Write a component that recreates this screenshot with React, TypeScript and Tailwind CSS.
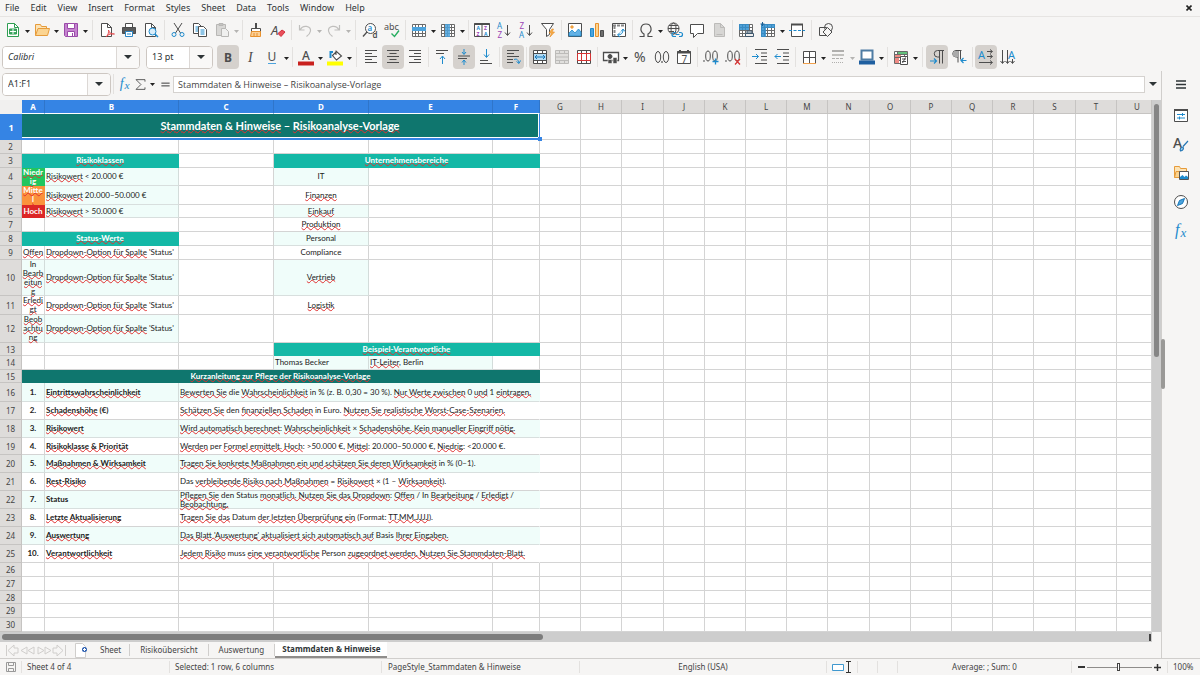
import React from "react";
import type { ReactNode } from "react";

const INK = "#4d4d4d";
const BLUE = "#1e8bcd";

function Svg({ children, size = 16 }: { children: ReactNode; size?: number }) {
  return (
    <svg width={size} height={size} viewBox="0 0 16 16" fill="none" stroke={INK} strokeWidth="1" aria-hidden="true" className="shrink-0 overflow-visible">
      {children}
    </svg>
  );
}

function Letter({ x, y, size, color = INK, children, weight = 400, italic = false, serif = false }: { x: number; y: number; size: number; color?: string; children: ReactNode; weight?: number; italic?: boolean; serif?: boolean }) {
  return (
    <text x={x} y={y} fontSize={size} fill={color} stroke="none" fontWeight={weight} fontStyle={italic ? "italic" : "normal"} fontFamily={serif ? "Liberation Serif, serif" : "Noto Sans, sans-serif"}>
      {children}
    </text>
  );
}

const gridLines = "M1.5 2.5h13v12h-13zM1.5 5.5h13M1.5 8.5h13M1.5 11.5h13M4.5 2.5v12M7.5 2.5v12M11.5 2.5v12";

const icons: Record<string, ReactNode> = {
  "New": <><path d="M2.5 1.5h7l4 4v9h-11z" fill="#fff" stroke="#2f9e52" /><path d="M9.5 1.5v4h4" stroke="#2f9e52" /><path d="M4.5 7h7v5h-7z" fill="#3fa863" stroke="#2f9e52" /><path d="M5 9.5h6M8 7v5" stroke="#fff" /></>,
  "Open": <><path d="M1.5 13.5v-11h5l1 2h5v2" fill="#fce3b5" stroke="#e69b3a" /><path d="M1.5 13.5l2.5-7h11.5l-2 7z" fill="#fbd491" stroke="#e69b3a" /></>,
  "Save": <><path d="M1.5 1.5h13v13h-12l-1-1z" fill="#c583cf" stroke="#9a4aa8" /><path d="M4.5 1.5h7v5h-7zM4.5 9.5h7v5h-7z" fill="#fff" stroke="#9a4aa8" /><path d="M9.5 11v3" stroke="#9a4aa8" /></>,
  "Export as PDF": <><path d="M2.5 1.5h6l4 4v9h-10z" fill="#fff" /><path d="M8.5 1.5v4h4" /><path d="M7 15c2-2 3-5 2.500-7 1 3 3 4.500 6 4-3-.5-6 0-8.500 3z" stroke="#e03a3e" strokeWidth=".8" fill="#f7b6b8" /></>,
  "Print": <><path d="M4.5 1.5h7v4h-7z" fill="#fff" /><path d="M1.5 5.5h13v6h-13z" fill="#5a5a5a" /><path d="M4.5 9.5h7v5h-7z" fill="#fff" stroke="#2d86c4" /><path d="M6 12h4" stroke={BLUE} /></>,
  "Print Preview": <><path d="M2.5 1.5h6l4 4v9h-10z" fill="#fff" /><path d="M8.5 1.5v4h4" /><circle cx="9.5" cy="9.5" r="3.5" fill="#d9edfa" stroke={BLUE} /><path d="M12 12l3 3" stroke={BLUE} strokeWidth="1.5" /></>,
  "Cut": <><path d="M4 1l6.500 10M12 1L5.500 11" /><circle cx="4" cy="12.5" r="2" stroke={BLUE} /><circle cx="12" cy="12.5" r="2" stroke={BLUE} /></>,
  "Copy": <><path d="M1.5 1.5h5l3 3v7h-8z" fill="#fff" /><path d="M3.5 5h3M3.5 7h3M3.5 9h3" stroke={BLUE} /><path d="M6.5 4.5h5l3 3v7h-8z" fill="#fff" /><path d="M8.5 8h4M8.5 10h4M8.5 12h4" stroke={BLUE} /></>,
  "Paste": <><path d="M2.5 2.5h9v11h-9z" fill="#d8d7d5" stroke="#b8b7b5" /><path d="M5 1.5h4v2H5z" fill="#c4c3c1" stroke="#b8b7b5" /><path d="M7.5 6.5h4l3 3v5h-7z" fill="#f0f0ef" stroke="#b8b7b5" /></>,
  "Clone Formatting": <><path d="M8 1v5" strokeWidth="2" /><path d="M3.5 6.5h9v3h-9z" fill="#fff" /><path d="M3.5 9.5h9v5h-10z" fill="#fbcf96" stroke="#e8912d" /><path d="M6 11v3M9 11v3" stroke="#e8912d" /></>,
  "Clear Direct Formatting": <><Letter x={1} y={12.5} size={13} italic>A</Letter><path d="M8 11.5l4-3.500 3 2-4 4.500z" fill="#e94f5a" stroke="#d3303c" /></>,
  "Undo": <path d="M2.500 3v5h5M3 8c3-6 11-4 10.500 1-.3 2.500-2 4-4 5.500" stroke="#c0bfbd" strokeWidth="1.2" />,
  "Redo": <path d="M13.500 3v5h-5M13 8C10 2 2 4 2.500 9c.3 2.500 2 4 4 5.500" stroke="#c0bfbd" strokeWidth="1.2" />,
  "Find and Replace": <><circle cx="8.5" cy="6.5" r="5" fill="#fff" /><path d="M5 10l-4 4.500" strokeWidth="1.3" /><Letter x={5.5} y={9} size={8} color={BLUE} weight={600}>a</Letter><Letter x={10.5} y={15.5} size={8} weight={600}>d</Letter></>,
  "Spelling": <><Letter x={0} y={7.5} size={9}>abc</Letter><path d="M7.5 11.5l3 3L15 8.500" stroke="#27ae60" strokeWidth="1.4" /></>,
  "Row": <><path d={gridLines} fill="#fff" stroke="#6a6a6a" /><path d="M1 5h14v4H1z" fill="#4ca3dd" stroke="none" /></>,
  "Column": <><path d={gridLines} fill="#fff" stroke="#6a6a6a" /><path d="M5 2h5v13H5z" fill="#4ca3dd" stroke="none" opacity=".85" /></>,
  "Sort": <><path d="M.5 1.5h15v13H.5zM8 1.5v13" fill="#fff" /><path d="M.5 2h15" strokeWidth="2" /><Letter x={2.5} y={8} size={5} color={BLUE} weight={700}>A</Letter><Letter x={2.5} y={13.5} size={5} color="#9b45b5" weight={700}>Z</Letter><Letter x={10} y={8} size={5} color="#9b45b5" weight={700}>Z</Letter><Letter x={10} y={13.5} size={5} color={BLUE} weight={700}>A</Letter></>,
  "Sort Ascending": <><Letter x={1} y={7} size={8} color={BLUE}>A</Letter><Letter x={1.5} y={15.5} size={8} color="#9b45b5">Z</Letter><path d="M11.5 3v10M9 10.500l2.500 3 2.500-3" /></>,
  "Sort Descending": <><Letter x={1.5} y={7} size={8} color="#9b45b5">Z</Letter><Letter x={1} y={15.5} size={8} color={BLUE}>A</Letter><path d="M11.5 3v10M9 10.500l2.500 3 2.500-3" /></>,
  "AutoFilter": <><path d="M1.5 1.5h12l-4 6v5l-3 2v-7z" fill="#fff" /><path d="M12 7l-3 4h2.500L10 15l4.500-5H12l1.500-3z" fill="#f6b04d" stroke="#e8912d" strokeWidth=".7" /></>,
  "Image": <><path d="M1.5 1.5h13v13h-13z" fill="#fff" /><path d="M2 14v-3l3-3 3 3 3.500-4 2.500 3v4z" fill="#63b1e5" stroke={BLUE} strokeWidth=".8" /><circle cx="5" cy="5" r="1.3" fill="#f6b04d" stroke="#e8912d" strokeWidth=".7" /></>,
  "Chart": <><path d="M1.5 6.5h3v8h-3z" fill="#4ca3dd" stroke={BLUE} /><path d="M6.5 1.5h3v13h-3z" fill="#fbd491" stroke="#e8912d" /><path d="M11.5 8.5h3v6h-3z" fill="#6d6d6d" /></>,
  "Pivot Table": <><path d="M1.5 1.5h13v13h-13z" fill="#fff" /><path d="M2 3.5h12M3.5 4v10" stroke="#888" strokeWidth="2" strokeDasharray="3 1" /><path d="M7 13c3 0 5-2 5-5M10 9.500L12 7l2 2.500M9 10.500L6.500 13 9 15" stroke={BLUE} /></>,
  "Special Character": <path d="M1.500 14.500h4.500v-2.500C1 9 2.500 2 8 2s7 7 2 10v2.500h4.500" strokeWidth="1.2" />,
  "Hyperlink": <><circle cx="6.5" cy="6.5" r="5.5" /><ellipse cx="6.5" cy="6.5" rx="2.5" ry="5.5" /><path d="M1 6.500h11M2 3.500h9M2 9.500h5" /><path d="M9 10.500H7a2 2 0 000 4h2M12 10.500h1.500a2 2 0 010 4H12M8.500 12.500h4" stroke={BLUE} strokeWidth="1.2" /></>,
  "Comment": <path d="M1.5 2.5h13v9h-6l-4 4v-4h-3z" fill="#fff" />,
  "Headers and Footers": <><path d="M3.5 1.5h6l4 4v9h-10z" fill="#d7d6d4" stroke="#bcbbb9" /><path d="M9.5 1.5v4h4M5.5 12.5h6" stroke="#bcbbb9" /></>,
  "Define Print Area": <><path d={gridLines} fill="#fff" stroke="#6a6a6a" /><path d="M1 2h10v6H1z" fill="#2f8fd0" stroke="none" opacity=".85" /><path d="M7.5 11.5h8v3h-8zM9 9h5v2H9z" fill="#eee" stroke="#3f586e" /></>,
  "Freeze Rows and Columns": <><path d={gridLines} fill="#fff" stroke="#6a6a6a" /><path d="M1 2h14v4H1zM1 2h5v13H1z" fill="#2f8fd0" stroke="none" opacity=".85" /><path d="M2.5 0v4M.5 2h4" stroke="#1c5f94" /></>,
  "Split Window": <><path d="M2.5 2.5h11v12h-11z" fill="#fff" /><path d="M2 2.5h12" strokeWidth="2" /><path d="M0 8.5h16" stroke={BLUE} strokeDasharray="3 1.5" /></>,
  "Show Draw Functions": <><path d="M1.5 5.5h7v8h-7z" fill="#f6f5f4" /><circle cx="10.5" cy="5.5" r="4" /><path d="M9.5 5.5l4.500 4.500-4.500 4.500L5 10z" fill="#f6f5f4" /></>,
  "Italic": <Letter x={6} y={13} size={14} italic serif>I</Letter>,
  "Bold": <Letter x={4} y={12.5} size={12} weight={700}>B</Letter>,
  "Underline": <><Letter x={3.5} y={12} size={12}>U</Letter><path d="M4 14.500h8" stroke="#4ca3dd" strokeWidth="1" /></>,
  "Font Color": <><Letter x={4} y={10.5} size={12} weight={500}>A</Letter><path d="M0 14.500h16" stroke="#c9211e" strokeWidth="4" /></>,
  "Background Color": <><path d="M5.5 6.5l4-4 5 4.500-5 4-4-4.500zM9 6V1.500" fill="#fff" strokeWidth="1.1" /><path d="M6 3H3.500v6" stroke={BLUE} strokeWidth="2" /><path d="M0 14.500h16" stroke="#ffff00" strokeWidth="4" /></>,
  "Align Left": <path d="M2 1.500h12M2 4.500h7M2 7.500h12M2 10.500h7M2 13.500h12" />,
  "Align Center": <path d="M2 1.500h12M4.500 4.500h7M2 7.500h12M4.500 10.500h7M2 13.500h12" />,
  "Align Right": <path d="M2 1.500h12M7 4.500h7M2 7.500h12M7 10.500h7M2 13.500h12" />,
  "Align Top": <><path d="M2 1.500h12M2 4.500h8" /><path d="M8.500 15V7.500M6 10l2.500-3L11 10" stroke={BLUE} /></>,
  "Center Vertically": <><path d="M2 7h12M2 9.500h9" /><path d="M8 0v5M6 3l2 2.500L10 3M8 16v-5M6 13.500L8 11l2 2.500" stroke={BLUE} /></>,
  "Align Bottom": <><path d="M2 11.500h8M2 14.500h12" /><path d="M8.500 0v8M6 5.500l2.500 3 2.500-3" stroke={BLUE} /></>,
  "Wrap Text": <><path d="M2 1.500h12M2 4.500h7M2 7.500h12M2 10.500h6M2 13.500h6" /><path d="M9 10.500c3-1 4 0 5 3.500M11.500 12.500l2.500 2 1.500-3" stroke={BLUE} /></>,
  "Merge and Center Cells": <><path d="M1.5 1.5h13v13h-13zM1.5 4.5h13M1.5 11.5h13M5.5 1.5v3M10.5 1.5v3M5.5 11.5v3M10.5 11.5v3" fill="#fff" /><path d="M2 5h12v6H2z" fill="#b5dcf4" stroke="none" /><path d="M3 8h10M5 6L3 8l2 2M11 6l2 2-2 2" stroke="#1576b8" /></>,
  "Merge Cells": <path d="M1.5 1.5h13v13h-13zM1.5 4.5h13M1.5 11.5h13M5.5 1.5v3M10.5 1.5v3M5.5 11.5v3M10.5 11.5v3M1.5 8h13" fill="#e0dfdd" stroke="#bcbbb9" />,
  "Split Cells": <><path d="M1.5 1.5h13v13h-13zM1.5 4.5h13M1.5 11.5h13M5.5 1.5v3M10.5 1.5v3M5.5 11.5v3M10.5 11.5v3" fill="#fff" /><path d="M1.5 4.5h13v7h-13zM5.5 4.5v7M10.5 4.5v7" stroke="#d63434" /></>,
  "Format as Currency": <><path d="M.5 3.5h15v8H.5z" fill="#fff" strokeWidth="1.3" /><circle cx="7" cy="7.5" r="2" fill="#4d4d4d" /><path d="M5 10.5h4v4H5zM10 8.5h4v6h-4z" fill="#4d4d4d" stroke="#f6f5f4" strokeWidth=".6" /></>,
  "Format as Percent": <Letter x={2} y={13} size={14}>%</Letter>,
  "Format as Number": <><ellipse cx="4" cy="8" rx="2.7" ry="5.5" /><ellipse cx="12" cy="8" rx="2.7" ry="5.5" /><circle cx="8" cy="13" r=".5" /></>,
  "Format as Date": <><path d="M1.5 2.5h13v12h-13z" fill="#fff" /><path d="M1 3.5h14M4 1v3M12 1v3" strokeWidth="2" /><Letter x={5.5} y={13.5} size={10}>7</Letter></>,
  "Add Decimal Place": <><ellipse cx="5" cy="7" rx="2.3" ry="5" /><ellipse cx="12" cy="7" rx="2.3" ry="5" /><circle cx="1" cy="12" r=".4" /><path d="M9.5 12.5h6M12.5 9.5v6" stroke={BLUE} strokeWidth="1.3" /></>,
  "Delete Decimal Place": <><ellipse cx="5" cy="7" rx="2.3" ry="5" /><ellipse cx="12" cy="7" rx="2.3" ry="5" /><circle cx="1" cy="12" r=".4" /><path d="M10 10l5 5.500M15 10l-5 5.500" stroke="#d63434" strokeWidth="1.2" /></>,
  "Increase Indent": <><path d="M3 .5h12M9 4h6M9 7.500h6M9 11h6M3 14.500h12" /><path d="M0 7.500h6.500M4 5L6.500 7.500 4 10" stroke={BLUE} /></>,
  "Decrease Indent": <><path d="M3 .5h12M9 4h6M9 7.500h6M9 11h6M3 14.500h12" /><path d="M7 7.500H.8M3.500 5L1 7.500 3.500 10" stroke={BLUE} /></>,
  "Borders": <><path d="M2.5 2.5h12v12h-12zM8.5 2.5v12M2.5 8.5h12" fill="#fff" /><path d="M2 14.5h13" stroke="#f0a04b" /></>,
  "Border Style": <><path d="M2 2h12" stroke="#b0afad" strokeWidth="2" /><path d="M2 6h12" stroke="#b0afad" strokeWidth="1.5" /><path d="M2 9.500h12" stroke="#b0afad" strokeDasharray="3 1" /><path d="M2 13.500h12" stroke="#b0afad" strokeDasharray="1 1" /></>,
  "Border Color": <><path d="M2.5 1.5h11v9h-11z" fill="#fff" stroke="#4e7ca3" strokeWidth="2" /><path d="M0 13.500h16" stroke="#1f5fa0" strokeWidth="4" /></>,
  "Conditional Formatting": <><path d={gridLines} fill="#fff" stroke="#6a6a6a" /><path d="M5 3h9v2H5z" fill="#63c07b" stroke="none" /><path d="M2 6h6v2H2zM2 9h4v5H2z" fill="#ef8a84" stroke="none" /><path d="M7.5 7.5h7v8h-7z" fill="#fff" /><path d="M9 10h4M9 12.5h4M12.5 8.5L9.5 14" /></>,
  "Left-To-Right": <><path d="M13.500 1.500v13M10.500 14.500V1.500M15 1.500H8.500a3 3 0 000 6.500h2" /><path d="M1 12h6M5 9.500L7.500 12 5 14.500" stroke={BLUE} strokeWidth="1.2" /></>,
  "Right-To-Left": <><path d="M7 1.500v12M9.500 1.500v9M10.500 1.500H5a3 3 0 000 6.500h2" /><path d="M4.500 2H7v6H5a3 3 0 01-.5-6z" fill="#aaa" stroke="none" /><path d="M15.500 11.500h-5M12.500 9l-2.500 2.500 2.500 2.500" stroke={BLUE} strokeWidth="1.2" /></>,
  "Text Direction Horizontal": <><Letter x={0} y={9.5} size={11} color={BLUE}>A</Letter><path d="M9 2.500h5M12 .5l2.500 2L12 4.500M9 7.500h5M12 5.500l2.500 2-2.500 2M1 13.500h13M12 11.500l2.500 2-2.500 2" /></>,
  "Text Direction Vertical": <><Letter x={8} y={9.5} size={11} color={BLUE}>A</Letter><path d="M2.500 1v13M.5 12l2 2.500 2-2.500M7.500 1v13M5.500 12l2 2.500 2-2.500M12.500 10v4M10.500 12l2 2.500 2-2.500" /></>,
  "Properties": <><path d="M1.5 2.5h13v12h-13z" fill="#fff" /><path d="M1 3h14" strokeWidth="2" /><path d="M4 7.500h8M4 11h8M9.500 6v3M6.500 9.500v3" stroke={BLUE} /></>,
  "Styles": <><Letter x={0} y={12} size={14} weight={500}>A</Letter><path d="M15 5l-5 5.500M7.500 15c-1-2 .5-4 2.500-4 1 1.500 0 4-2.500 4z" fill="#9ed0f0" stroke="#2577b5" strokeWidth="1.2" /></>,
  "Gallery": <><path d="M1.5 12.5v-11h5l1 2h6v3" fill="#fce3b5" stroke="#e69b3a" /><path d="M1.5 12.5l1.500-6h11v6z" fill="#fbd491" stroke="#e69b3a" /><path d="M6.5 6.5h9v8h-9z" fill="#fff" stroke="#555" /><path d="M7 14v-2l2.500-2 2 2 1.500-1.500 2 1.500v2z" fill={BLUE} stroke="none" /></>,
  "Navigator": <><circle cx="8" cy="8" r="6.5" fill="#fff" /><path d="M11.500 4.500L9.500 9.500l-5 2 2-5z" fill="#4ca3dd" stroke="#1576b8" /></>,
  "Functions": <><Letter x={2} y={12} size={16} color={BLUE} italic serif>f</Letter><Letter x={7.5} y={14} size={13} color={BLUE} italic serif>x</Letter></>,
  "Sum": <path d="M13.500 4.500v-2.500h-11l6 6-6 6h11V11.500" strokeWidth="1.1" />,
  "Formula": <path d="M2 6h12M2 10h12" stroke="#333" strokeWidth="1.4" />,
};

function Caret({ muted = false }: { muted?: boolean }) {
  return (
    <svg width="5" height="3" viewBox="0 0 5 3" aria-hidden="true">
      <path d="M0 0h5L2.500 3z" fill={muted ? "#b5b4b2" : "#222"} />
    </svg>
  );
}

function BigCaret() {
  return (
    <svg width="8" height="4" viewBox="0 0 8 4" aria-hidden="true">
      <path d="M0 0h8L4 4z" fill="#2e3436" />
    </svg>
  );
}

function ToolButton({ name, active = false }: { name: string; active?: boolean }) {
  return (
    <button type="button" aria-label={name} aria-pressed={active} className={"flex h-6 w-[22px] shrink-0 items-center justify-center rounded-sm " + (active ? "bg-[#d5d1cd]" : "")}>
      <Svg>{icons[name]}</Svg>
    </button>
  );
}

const mutedCarets = ["Paste", "Undo", "Redo", "Border Style"];

/* "|" is a separator, "||" a wide separator; a trailing "+" adds a drop-down arrow, a trailing "*" marks a pressed button. */
function ToolItems({ items }: { items: string[] }) {
  return (
    <>
      {items.map((item, i) => {
        if (item === "|" || item === "||") {
          return (
            <span key={i} className={"flex h-5 shrink-0 justify-center " + (item === "|" ? "w-[5px]" : "w-[7px]")}>
              <span className="w-px bg-[#e3e1df]" />
            </span>
          );
        }
        const name = item.replace(/[+*]$/, "");
        return (
          <React.Fragment key={i}>
            <ToolButton name={name} active={item.endsWith("*")} />
            {item.endsWith("+") && (
              <button type="button" aria-label={name + " options"} className="flex h-6 w-[7px] shrink-0 items-center justify-center pt-[2px]">
                <Caret muted={mutedCarets.includes(name)} />
              </button>
            )}
          </React.Fragment>
        );
      })}
    </>
  );
}

const standardBar = ["New+", "Open+", "Save+", "||", "Export as PDF", "Print", "Print Preview", "|", "Cut", "Copy", "Paste+", "|", "Clone Formatting", "Clear Direct Formatting", "|", "Undo+", "Redo+", "||", "Find and Replace", "Spelling", "|", "Row+", "Column+", "|", "Sort", "Sort Ascending", "Sort Descending", "AutoFilter", "|", "Image", "Chart", "Pivot Table", "|", "Special Character+", "Hyperlink", "Comment", "Headers and Footers", "|", "Define Print Area", "Freeze Rows and Columns+", "Split Window", "||", "Show Draw Functions"];

const formatBar = ["Bold*", "Italic", "Underline+", "|", "Font Color+", "Background Color+", "||", "Align Left", "Align Center*", "Align Right", "|", "Align Top", "Center Vertically*", "Align Bottom", "|", "Wrap Text*", "|", "Merge and Center Cells*", "Merge Cells", "Split Cells", "|", "Format as Currency+", "Format as Percent", "Format as Number", "Format as Date", "|", "Add Decimal Place", "Delete Decimal Place", "|", "Increase Indent", "Decrease Indent", "|", "Borders+", "Border Style+", "Border Color+", "|", "Conditional Formatting+", "||", "Left-To-Right*", "Right-To-Left", "|", "Text Direction Horizontal*", "Text Direction Vertical"];

function ComboBox({ label, value, className, inputClass = "" }: { label: string; value: string; className: string; inputClass?: string }) {
  return (
    <div className={"flex h-[23px] shrink-0 overflow-hidden rounded border border-[#cdc7c2] bg-white " + className}>
      <input aria-label={label} defaultValue={value} className={"min-w-0 flex-1 bg-white px-[5px] text-[9px] text-[#2e3436] outline-none " + inputClass} />
      <button type="button" aria-label={label + " list"} className="flex w-[23px] items-center justify-center border-l border-[#dcd8d5] bg-[#f9f8f7]">
        <BigCaret />
      </button>
    </div>
  );
}

/* Text between asterisks is flagged by the spell checker. */
function Spelled({ text }: { text: string }) {
  return (
    <span>
      {text.split("*").map((part, i) =>
        i % 2 ? (
          <span key={i} className="underline decoration-[#e03131] decoration-wavy decoration-1 [text-decoration-skip-ink:none] [text-underline-offset:-1px]">
            {part}
          </span>
        ) : (
          part
        ),
      )}
    </span>
  );
}

type Cell = { span?: number; text?: string; tone?: string; look?: string };

const TINT = "bg-[#f0fdfa] border-r-[#d3dcda] border-b-[#d8dfde]";
const TINT_MERGED = "bg-[#f0fdfa] border-r-[#f0fdfa] border-b-[#d8dfde]";
const PLAIN = "border-r-[#d4d4d4] border-b-[#d4d4d4]";
const HEAD = "bg-[#14b8a6] border-r-[#14b8a6] border-b-[#14b8a6] text-white";
const DEEP = "bg-[#0f766e] border-r-[#0f766e] border-b-[#0f766e] text-white";
const MERGED = "border-r-white border-b-[#d4d4d4]";

const blank = (n: number): Cell[] => Array.from({ length: n }, () => ({}));
const center = "justify-center text-center";

function guide(no: number, title: string, text: string): Cell[] {
  const tinted = no % 2 === 1;
  return [
    { text: no + ".", tone: tinted ? TINT : PLAIN, look: center + " font-bold" },
    { text: title, tone: tinted ? TINT : PLAIN, look: "font-bold" },
    { span: 4, text, tone: tinted ? TINT_MERGED : MERGED },
  ];
}

const option = "*Dropdown-Option für Spalte* 'Status'";

const rows: { h: string; cells: Cell[] }[] = [
  { h: "h-[14px]", cells: blank(6) },
  { h: "h-[14px]", cells: [{ span: 2, text: "*Risikoklassen*", tone: HEAD, look: center + " font-bold" }, {}, { span: 3, text: "*Unternehmensbereiche*", tone: HEAD, look: center + " font-bold" }] },
  { h: "h-[18px]", cells: [{ text: "*Niedr ig*", tone: "bg-[#22c55e] border-r-[#22c55e] border-b-[#22c55e] text-white", look: center + " font-bold" }, { text: "*Risikowert* < 20.000 €", tone: TINT }, {}, { text: "IT", tone: TINT, look: center }, {}, {}] },
  { h: "h-[19px]", cells: [{ text: "*Mitte l*", tone: "bg-[#fb923c] border-r-[#fb923c] border-b-[#fb923c] text-white", look: center + " font-bold" }, { text: "*Risikowert* 20.000–50.000 €", tone: TINT }, {}, { text: "*Finanzen*", look: center }, {}, {}] },
  { h: "h-[13px]", cells: [{ text: "Hoch", tone: "bg-[#dc2626] border-r-[#dc2626] border-b-[#dc2626] text-white", look: center + " font-bold" }, { text: "*Risikowert* > 50.000 €", tone: TINT }, {}, { text: "*Einkauf*", tone: TINT, look: center }, {}, {}] },
  { h: "h-[14px]", cells: [{}, {}, {}, { text: "*Produktion*", look: center }, {}, {}] },
  { h: "h-[14px]", cells: [{ span: 2, text: "*Status-Werte*", tone: HEAD, look: center + " font-bold" }, {}, { text: "Personal", tone: TINT, look: center }, {}, {}] },
  { h: "h-[14px]", cells: [{ text: "*Offen*", look: center }, { text: option }, {}, { text: "Compliance", look: center }, {}, {}] },
  { h: "h-[36px]", cells: [{ text: "In *Bearb eitun g*", tone: TINT, look: center }, { text: option, tone: TINT }, {}, { text: "*Vertrieb*", tone: TINT, look: center }, {}, {}] },
  { h: "h-[19px]", cells: [{ text: "*Erledi gt*", look: center }, { text: option }, {}, { text: "*Logistik*", look: center }, {}, {}] },
  { h: "h-[28px]", cells: [{ text: "*Beob achtu ng*", tone: TINT, look: center }, { text: option, tone: TINT }, {}, {}, {}, {}] },
  { h: "h-[13px]", cells: [{}, {}, {}, { span: 3, text: "*Beispiel-Verantwortliche*", tone: HEAD, look: center + " font-bold" }] },
  { h: "h-[14px]", cells: [{}, {}, {}, { text: "Thomas Becker", tone: TINT }, { text: "*IT-Leiter*, Berlin", tone: TINT }, {}] },
  { h: "h-[13px]", cells: [{ span: 6, text: "*Kurzanleitung zur Pflege der Risikoanalyse-Vorlage*", tone: DEEP, look: center + " font-bold" }] },
  { h: "h-[19px]", cells: guide(1, "*Eintrittswahrscheinlichkeit*", "*Bewerten Sie* die *Wahrscheinlichkeit* in % (z. B. 0,30 = 30 %). *Nur Werte zwischen* 0 *und* 1 *eintragen.*") },
  { h: "h-[18px]", cells: guide(2, "*Schadenshöhe* (€)", "*Schätzen Sie* den *finanziellen Schaden* in Euro. *Nutzen Sie realistische Worst-Case-Szenarien.*") },
  { h: "h-[18px]", cells: guide(3, "*Risikowert*", "*Wird automatisch berechnet*: *Wahrscheinlichkeit* × *Schadenshöhe. Kein manueller Eingriff nötig.*") },
  { h: "h-[17px]", cells: guide(4, "*Risikoklasse & Priorität*", "*Werden* per *Formel ermittelt. Hoch*: >50.000 €, *Mittel*: 20.000–50.000 €, *Niedrig*: <20.000 €.") },
  { h: "h-[18px]", cells: guide(5, "*Maßnahmen & Wirksamkeit*", "*Tragen Sie konkrete Maßnahmen ein und schätzen Sie deren Wirksamkeit* in % (0–1).") },
  { h: "h-[18px]", cells: guide(6, "*Rest-Risiko*", "Das *verbleibende Risiko nach Maßnahmen* = *Risikowert* × (1 – *Wirksamkeit*).") },
  { h: "h-[18px]", cells: guide(7, "Status", "*Pflegen Sie* den Status *monatlich. Nutzen Sie das Dropdown*: *Offen* / In *Bearbeitung* / *Erledigt* / *Beobachtung.*") },
  { h: "h-[18px]", cells: guide(8, "*Letzte Aktualisierung*", "*Tragen Sie das* Datum *der letzten Überprüfung ein* (Format: *TT.MM.JJJJ*).") },
  { h: "h-[18px]", cells: guide(9, "*Auswertung*", "*Das Blatt 'Auswertung' aktualisiert sich automatisch auf* Basis *Ihrer Eingaben.*") },
  { h: "h-[18px]", cells: guide(10, "*Verantwortlichkeit*", "*Jedem Risiko* muss *eine verantwortliche* Person *zugeordnet werden. Nutzen Sie Stammdaten-Blatt.*") },
  { h: "h-[14px]", cells: blank(6) },
  { h: "h-[14px]", cells: blank(6) },
  { h: "h-[13px]", cells: blank(6) },
  { h: "h-[14px]", cells: blank(6) },
  { h: "h-[14px]", cells: blank(6) },
];

const letters = "ABCDEFGHIJKLMNOPQRSTU".split("");
const dataCols = ["w-[22px]", "w-[23px]", "w-[134px]", "w-[95px]", "w-[95px]", "w-[124px]", "w-[47px]"];
const wideCols = ["w-[41px]", "w-[41px]", "w-[42px]", "w-[41px]", "w-[41px]", "w-[41px]", "w-[41px]", "w-[42px]", "w-[41px]", "w-[41px]", "w-[41px]", "w-[41px]", "w-[42px]", "w-[41px]"];

function Grid() {
  const extra = letters.length - 6;
  return (
    <table className="w-full table-fixed border-separate border-spacing-0 bg-white font-[Lato,sans-serif] text-[8px] leading-[9px] text-[#222]">
      <colgroup>
        {[...dataCols, ...wideCols].map((w, i) => <col key={i} className={w} />)}
        <col />
      </colgroup>
      <thead>
        <tr className="font-['Noto_Sans',sans-serif] text-[8px]">
          <th aria-label="Select all" className="bg-[#f1f0ef] p-0" />
          {letters.map((l, i) => (
            <th key={l} scope="col" className={"h-[14px] border-r border-b p-0 text-center " + (i < 6 ? "border-r-[#2f75ca] border-b-white bg-[#3584e4] font-bold text-white " : "border-[#c6c4c2] bg-[#dedcda] font-normal text-[#444] ") + (l === "U" ? "pl-[6px]" : "")}>
              {l}
            </th>
          ))}
        </tr>
      </thead>
      <tbody>
        <tr>
          <th scope="row" className="h-[26px] bg-[#3584e4] p-0 text-center font-['Noto_Sans',sans-serif] text-[9px] font-bold text-white">1</th>
          <td colSpan={6} className="relative h-[26px] bg-[#3584e4] p-0 pr-px pb-[2px]">
            <div className="flex h-6 items-center justify-center border-r border-b border-white bg-[#0f766e] text-[11px] font-bold text-white">
              <Spelled text="*Stammdaten* & *Hinweise* – *Risikoanalyse-Vorlage*" />
            </div>
            <span className="absolute -right-[2px] -bottom-px size-[4px] bg-[#3584e4]" />
          </td>
          {Array.from({ length: extra }, (_, i) => <td key={i} className={"border-r border-b p-0 " + PLAIN} />)}
        </tr>
        {rows.map((row, r) => (
          <tr key={r}>
            <th scope="row" className={row.h + " border-r border-b border-[#c6c4c2] bg-[#dedcda] p-0 text-center font-['Noto_Sans',sans-serif] text-[8px] font-normal text-[#444]"}>{r + 2}</th>
            {row.cells.map((cell, c) => (
              <td key={c} colSpan={cell.span} className={row.h + " border-r border-b p-0 " + (cell.tone ?? PLAIN)}>
                {cell.text && (
                  <div className={"flex h-0 items-center px-px " + (cell.look ?? "")}>
                    <Spelled text={cell.text} />
                  </div>
                )}
              </td>
            ))}
            {Array.from({ length: extra }, (_, i) => <td key={"x" + i} className={"border-r border-b p-0 " + PLAIN} />)}
          </tr>
        ))}
      </tbody>
    </table>
  );
}

function SheetTabs() {
  return (
    <nav aria-label="Sheets" className="flex h-4 shrink-0 items-stretch bg-[#f6f5f4] text-[8px] text-[#444]">
      <div className="flex w-[72px] items-center justify-center">
        <svg width="62" height="12" viewBox="0 0 62 12" fill="none" stroke="#d0cecc" aria-hidden="true">
          <path d="M1.500 1v11M13 4H9V1L3 6.500 9 12V9h4zM22 3l-6 3.500 6 3.500zM29 3l-6 3.500 6 3.500zM33 3l6 3.500-6 3.500zM40 3l6 3.500-6 3.500zM48 4h4V1l6 5.500-6 5.500V9h-4zM60.500 1v11" />
        </svg>
      </div>
      <button type="button" aria-label="Add sheet" className="flex w-6 items-center pl-[2px]">
        <svg width="14" height="15" viewBox="0 0 14 15" fill="none" aria-hidden="true">
          <path d="M1.5.5h7l3 3v11h-10z" fill="#fff" stroke="#d0cecc" />
          <circle cx="10.5" cy="6.5" r="2.5" fill="#2a5db0" />
          <path d="M9 6.500h3M10.500 5v3" stroke="#fff" />
        </svg>
      </button>
      <button type="button" className="my-[2px] flex items-center border-r border-[#d0cecc] pr-2 pl-1">Sheet</button>
      <button type="button" className="my-[2px] flex items-center border-r border-[#d0cecc] px-[10px]">Risikoübersicht</button>
      <button type="button" className="my-[2px] flex items-center border-r border-[#d0cecc] px-[10px]">Auswertung</button>
      <button type="button" aria-current="page" className="flex items-center border-b-2 border-[#8f8d8b] bg-white px-[7px] font-bold text-[#2e3436]">Stammdaten &amp; Hinweise</button>
    </nav>
  );
}

function StatusBar() {
  return (
    <footer className="flex h-[17px] shrink-0 items-center border-t border-[#d0cecc] text-[8px] text-[#444] [&>div]:h-3 [&>div]:border-r [&>div]:border-[#e3e1df]">
      <div className="flex w-[22px] items-center justify-center">
        <svg width="12" height="12" viewBox="0 0 12 12" fill="none" stroke="#999" aria-hidden="true"><path d="M1.500 1.500h9v9h-9zM3.500 1.500v3h5v-3M3.500 10.500v-3h5v3" /></svg>
      </div>
      <div className="flex w-[148px] items-center pl-[5px]">Sheet 4 of 4</div>
      <div className="flex w-[212px] items-center pl-[5px]">Selected: 1 row, 6 columns</div>
      <div className="flex w-[198px] items-center pl-[6px]">PageStyle_Stammdaten &amp; Hinweise</div>
      <div className="flex flex-1 items-center justify-center">English (USA)</div>
      <div className="flex w-[31px] items-center justify-center">
        <svg width="20" height="12" viewBox="0 0 20 12" fill="none" aria-hidden="true">
          <path d="M.5 3.500h11v6H.5z" fill="#fff" stroke="#3f98cf" />
          <path d="M14 .5h5M14 11.500h5M16.500.5v11" stroke="#333" />
        </svg>
      </div>
      <div className="w-5" />
      <div className="w-5" />
      <div className="flex w-[174px] items-center justify-center">Average: ; Sum: 0</div>
      <div className="flex w-24 items-center justify-between px-[6px]">
        <button type="button" aria-label="Zoom out" className="h-[2px] w-[7px] bg-[#333]" />
        <input type="range" aria-label="Zoom" min={0} max={100} defaultValue={49} className="h-3 w-[65px] appearance-none bg-[linear-gradient(#8f8d8b,#8f8d8b)] bg-[length:100%_1px] bg-center bg-no-repeat [&::-webkit-slider-thumb]:h-2 [&::-webkit-slider-thumb]:w-[3px] [&::-webkit-slider-thumb]:appearance-none [&::-webkit-slider-thumb]:border [&::-webkit-slider-thumb]:border-[#444] [&::-webkit-slider-thumb]:bg-white" />
        <button type="button" aria-label="Zoom in" className="flex size-[7px] items-center justify-center">
          <svg width="7" height="7" viewBox="0 0 7 7" aria-hidden="true"><path d="M0 3.500h7M3.500 0v7" stroke="#333" strokeWidth="1.5" /></svg>
        </button>
      </div>
      <span className="w-8 pl-[5px]">100%</span>
    </footer>
  );
}

const menus = ["File", "Edit", "View", "Insert", "Format", "Styles", "Sheet", "Data", "Tools", "Window", "Help"];
const decks = ["Properties", "Styles", "Gallery", "Navigator", "Functions"];

export default function App() {
  return (
    <div className="flex h-screen flex-col overflow-hidden bg-[#f6f5f4] font-['Noto_Sans',sans-serif] text-[#2e3436]">
      <header className="flex h-[17px] shrink-0 items-center border-b border-[#e6e4e2] pl-[5px] text-[9px]">
        <nav aria-label="Menu" className="flex gap-[11px]">
          {menus.map((m) => <button key={m} type="button">{m}</button>)}
        </nav>
        <button type="button" aria-label="Close" className="mr-2 ml-auto">
          <svg width="6" height="6" viewBox="0 0 6 6" aria-hidden="true"><path d="M.5.5l5 5M5.500.5l-5 5" stroke="#222" strokeWidth="1.6" /></svg>
        </button>
      </header>

      <div role="toolbar" aria-label="Standard" className="flex h-[26px] shrink-0 items-center pl-[2px]">
        <ToolItems items={standardBar} />
      </div>
      <div role="toolbar" aria-label="Formatting" className="flex h-7 shrink-0 items-center pl-[2px]">
        <ComboBox label="Font name" value="Calibri" className="mr-[6px] w-[138px]" inputClass="italic" />
        <ComboBox label="Font size" value="13 pt" className="mr-1 w-[67px]" />
        <ToolItems items={formatBar} />
      </div>

      <div className="flex min-h-0 flex-1">
        <main className="flex min-w-0 flex-1 flex-col">
          <div className="flex h-[29px] shrink-0 items-center pb-[3px] pl-[2px]">
            <ComboBox label="Name box" value="A1:F1" className="w-[109px]" />
            <span className="mx-[2px] h-5 w-px bg-[#e3e1df]" />
            <button type="button" aria-label="Function wizard" className="flex w-[17px] justify-center"><Svg size={14}>{icons["Functions"]}</Svg></button>
            <button type="button" aria-label="Select function" className="flex w-[15px] justify-center"><Svg size={13}>{icons["Sum"]}</Svg></button>
            <button type="button" aria-label="Select function options" className="flex w-[9px] justify-center"><Caret /></button>
            <button type="button" aria-label="Formula" className="flex w-4 justify-center"><Svg size={11}>{icons["Formula"]}</Svg></button>
            <input aria-label="Formula input" defaultValue="Stammdaten & Hinweise – Risikoanalyse-Vorlage" className="h-[17px] min-w-0 flex-1 border border-[#d5d2cf] bg-white px-1 font-['Open_Sans',sans-serif] text-[9px] text-[#444] outline-none" />
            <button type="button" aria-label="Expand formula bar" className="flex w-4 items-center justify-center"><BigCaret /></button>
          </div>
          <div className="flex min-h-0 flex-1">
            <div className="min-w-0 flex-1 overflow-hidden"><Grid /></div>
            <div className="flex w-[9px] flex-col bg-[#cdcdcd] px-[2px] pt-1">
              <div className="h-[48%] rounded-full bg-[#858585]" />
            </div>
          </div>
          <div className="mr-[9px] flex h-[10px] shrink-0 items-center justify-between bg-[#cdcdcd] pl-[2px]">
            <div className="h-[6px] w-[47%] rounded-full bg-[#7d7d7d]" />
            <div className="mr-px h-[7px] w-[2px] bg-[#444]" />
          </div>
          <SheetTabs />
        </main>
        <aside className="relative flex w-[39px] shrink-0 flex-col items-center border-l border-[#d0cecc] pt-1">
          <button type="button" aria-label="Sidebar settings" className="flex h-[19px] w-6 items-center justify-center">
            <svg width="10" height="9" viewBox="0 0 10 9" aria-hidden="true"><path d="M0 1h10M0 4.500h10M0 8h10" stroke="#2e3436" strokeWidth="1.5" /></svg>
          </button>
          <div className="mt-[9px] flex flex-col gap-[5px]">
            {decks.map((d) => <ToolButton key={d} name={d} />)}
          </div>
          <span className="absolute top-[268px] -left-px h-[50px] w-1 rounded-sm bg-[#9a9997]" />
        </aside>
      </div>
      <StatusBar />
    </div>
  );
}
